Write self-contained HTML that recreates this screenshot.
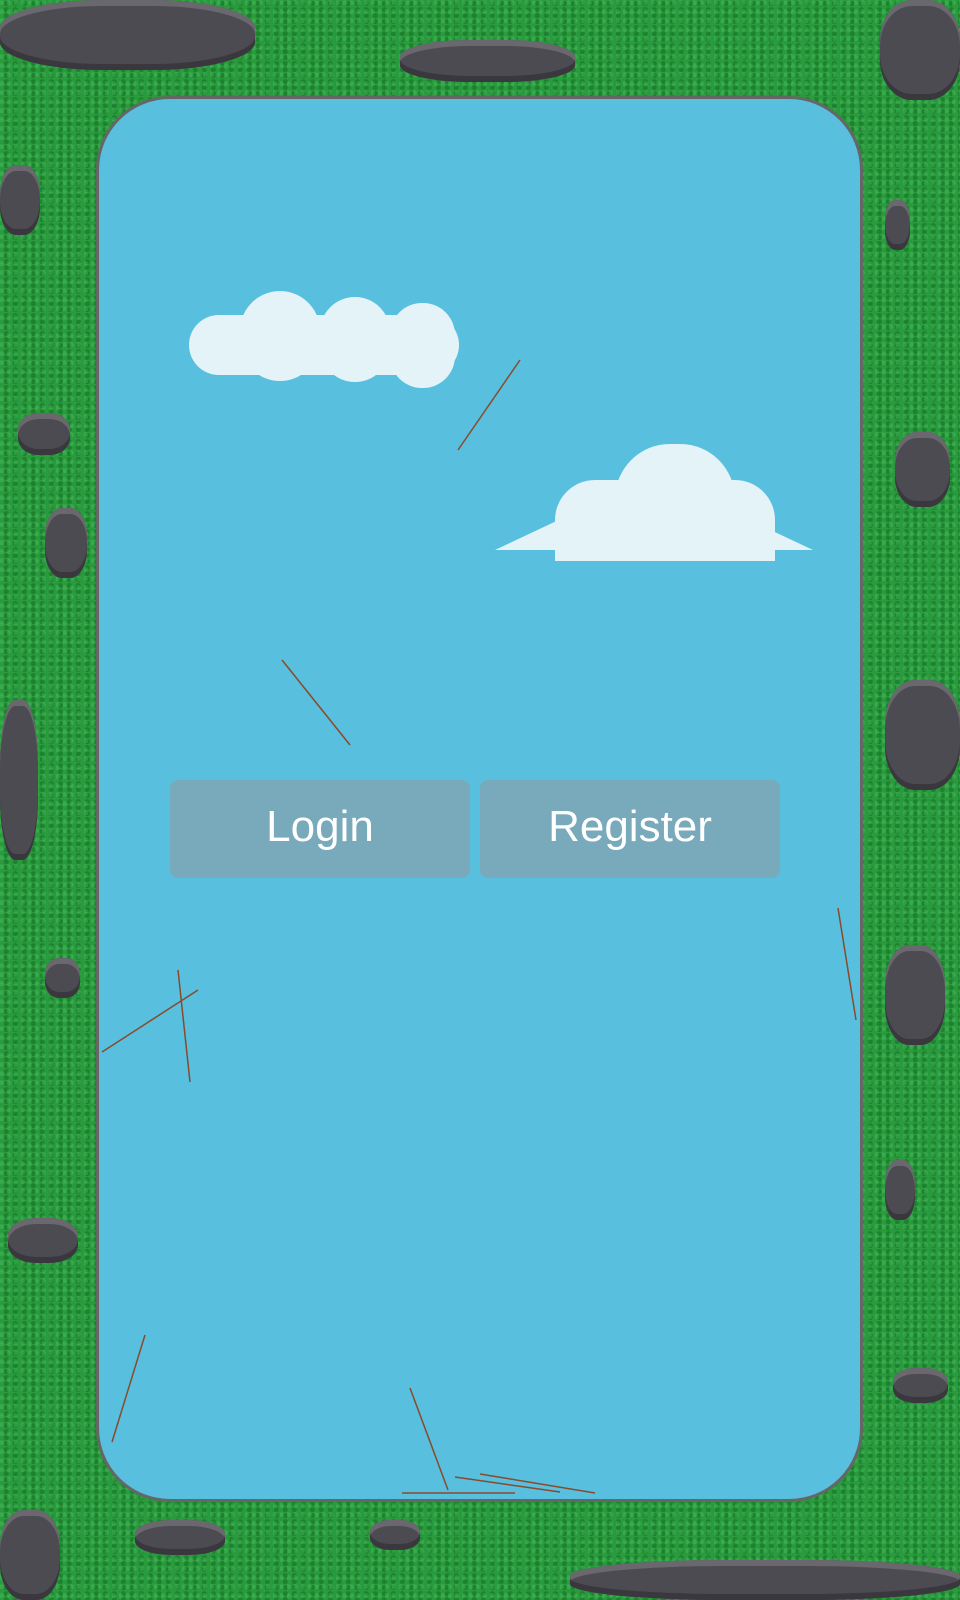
<!DOCTYPE html>
<html><head><meta charset="utf-8"><style>
html,body{margin:0;padding:0;width:960px;height:1600px;overflow:hidden;}
body{position:relative;background:#2a9b3c;
background-image:
radial-gradient(circle at 20% 30%, rgba(80,200,110,.35) 0 2px, transparent 3px),
radial-gradient(circle at 70% 60%, rgba(10,90,30,.4) 0 2px, transparent 3px);
background-size:7px 9px,9px 6px;}
.rock{position:absolute;background:#4d4b52;border-radius:40%;box-shadow:inset 0 -6px 0 #3a383e, inset 0 6px 0 #6a686e;}
.phone{position:absolute;left:96px;top:96px;width:767px;height:1406px;background:#58bfde;border:3px solid #666;border-radius:74px;box-sizing:border-box;}
.btn{position:absolute;top:780px;height:98px;width:300px;background:#78aabb;border-radius:8px;color:#fff;font:44px "Comic Sans MS","Liberation Sans",sans-serif;text-align:center;line-height:94px;}
.cloud{position:absolute;background:#e4f3f8;}
</style></head><body>
<div class="rock" style="left:0;top:0;width:255px;height:70px"></div>
<div class="rock" style="left:400px;top:40px;width:175px;height:42px"></div>
<div class="rock" style="left:880px;top:0;width:80px;height:100px"></div>
<div class="rock" style="left:0;top:165px;width:40px;height:70px"></div>
<div class="rock" style="left:18px;top:413px;width:52px;height:42px"></div>
<div class="rock" style="left:45px;top:508px;width:42px;height:70px"></div>
<div class="rock" style="left:0;top:700px;width:38px;height:160px"></div>
<div class="rock" style="left:885px;top:200px;width:25px;height:50px"></div>
<div class="rock" style="left:895px;top:432px;width:55px;height:75px"></div>
<div class="rock" style="left:885px;top:680px;width:75px;height:110px"></div>
<div class="rock" style="left:885px;top:945px;width:60px;height:100px"></div>
<div class="rock" style="left:45px;top:958px;width:35px;height:40px"></div>
<div class="rock" style="left:885px;top:1160px;width:30px;height:60px"></div>
<div class="rock" style="left:8px;top:1218px;width:70px;height:45px"></div>
<div class="rock" style="left:893px;top:1368px;width:55px;height:35px"></div>
<div class="rock" style="left:0;top:1510px;width:60px;height:90px"></div>
<div class="rock" style="left:135px;top:1520px;width:90px;height:35px"></div>
<div class="rock" style="left:370px;top:1520px;width:50px;height:30px"></div>
<div class="rock" style="left:570px;top:1560px;width:390px;height:40px"></div>
<div class="phone"></div>
<!-- cloud 1 -->
<div class="cloud" style="left:189px;top:315px;width:270px;height:60px;border-radius:30px"></div>
<div class="cloud" style="left:240px;top:291px;width:80px;height:90px;border-radius:40px"></div>
<div class="cloud" style="left:320px;top:297px;width:70px;height:85px;border-radius:35px"></div>
<div class="cloud" style="left:390px;top:303px;width:65px;height:85px;border-radius:32px"></div>
<!-- cloud 2 -->
<div class="cloud" style="left:495px;top:520px;width:318px;height:30px;clip-path:polygon(0 100%,20% 0,80% 0,100% 100%)"></div>
<div class="cloud" style="left:555px;top:480px;width:220px;height:81px;border-radius:40px 40px 0 0"></div>
<div class="cloud" style="left:615px;top:444px;width:120px;height:117px;border-radius:55px 55px 0 0"></div>
<div class="btn" style="left:170px">Login</div>
<div class="btn" style="left:480px">Register</div>
<svg width="960" height="1600" style="position:absolute;left:0;top:0" stroke="#8a4a2a" stroke-width="1.5" fill="none">
<line x1="458" y1="450" x2="520" y2="360"/><line x1="282" y1="660" x2="350" y2="745"/>
<line x1="102" y1="1052" x2="198" y2="990"/><line x1="178" y1="970" x2="190" y2="1082"/>
<line x1="838" y1="908" x2="856" y2="1020"/><line x1="145" y1="1335" x2="112" y2="1442"/>
<line x1="410" y1="1388" x2="448" y2="1490"/><line x1="402" y1="1493" x2="515" y2="1493"/>
<line x1="455" y1="1477" x2="560" y2="1492"/><line x1="480" y1="1474" x2="595" y2="1493"/>
</svg>
</body></html>
